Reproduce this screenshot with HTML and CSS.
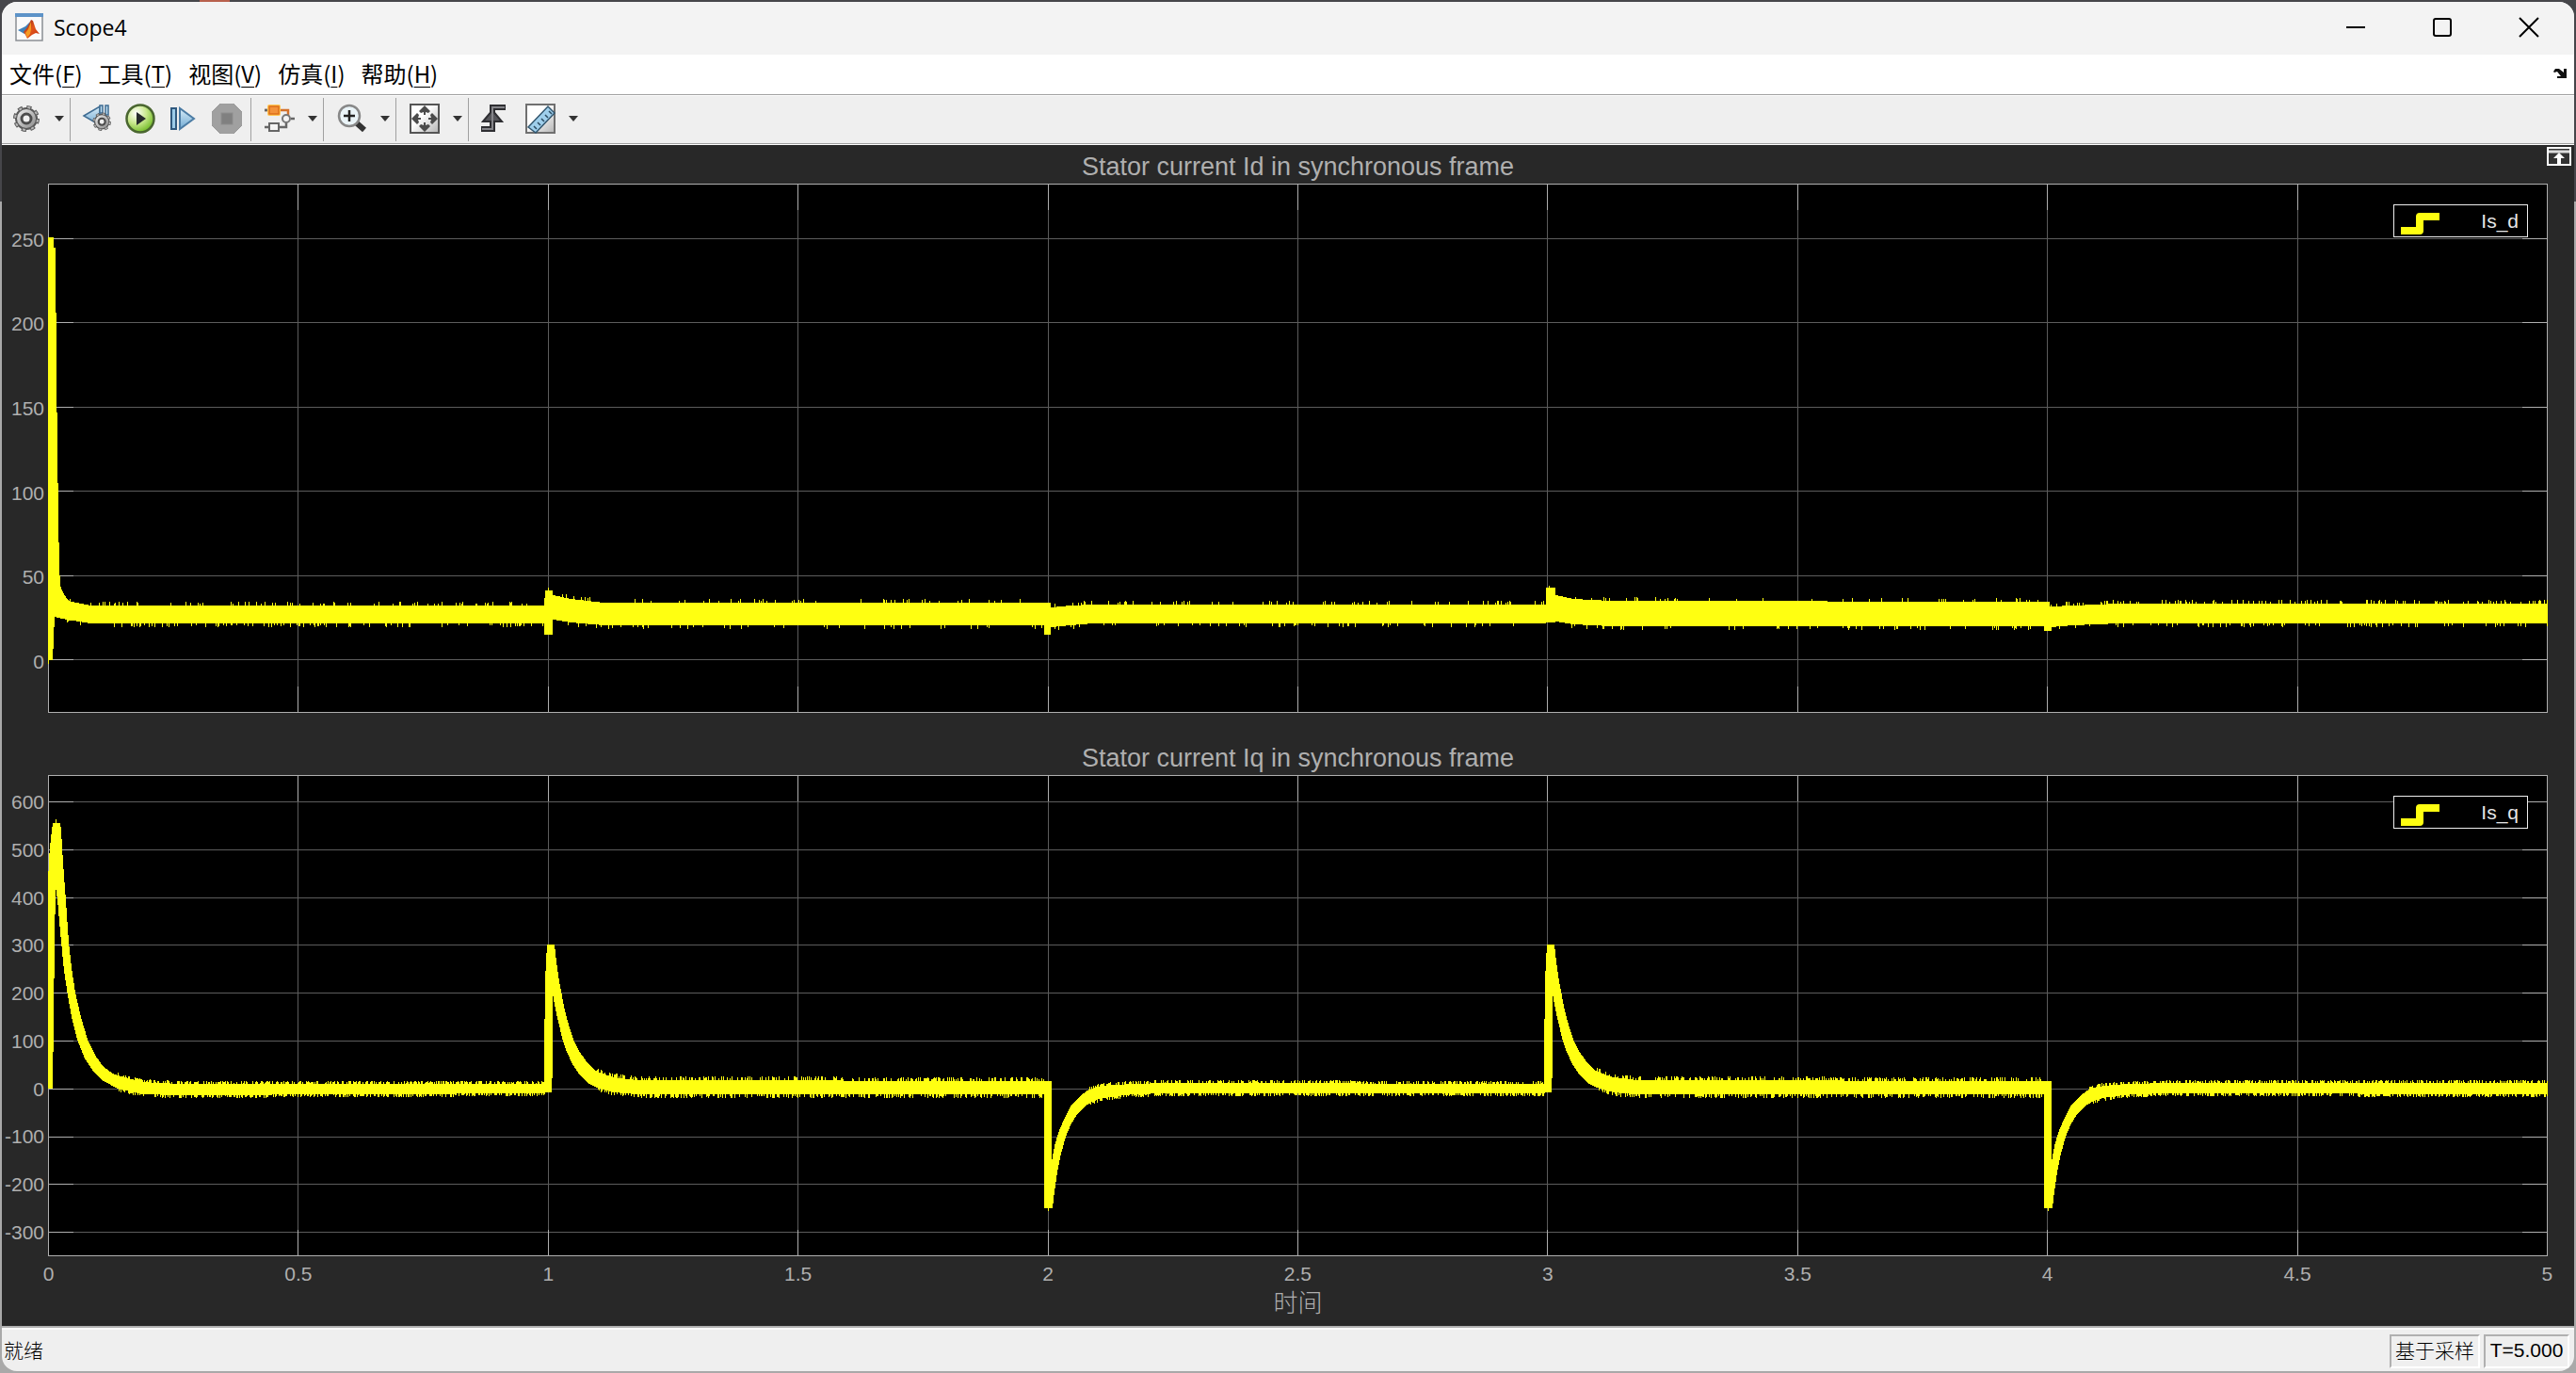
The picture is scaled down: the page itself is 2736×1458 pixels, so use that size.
FILE: index.html
```html
<!DOCTYPE html>
<html lang="zh-CN">
<head>
<meta charset="utf-8">
<title>Scope4</title>
<link rel="stylesheet" href="styles.css">
</head>
<body>
<svg class="defs" aria-hidden="true">
  <defs>
    <linearGradient id="metal" x1="0" y1="0" x2="1" y2="1"><stop offset="0" stop-color="#f4f4f4"/><stop offset="1" stop-color="#858585"/></linearGradient>
    <linearGradient id="sky" x1="0" y1="0" x2="0" y2="1"><stop offset="0" stop-color="#d8ecf8"/><stop offset="1" stop-color="#6fa9d2"/></linearGradient>
    <radialGradient id="green" cx=".35" cy=".3" r=".75"><stop offset="0" stop-color="#ffffff"/><stop offset=".5" stop-color="#c8e88c"/><stop offset="1" stop-color="#6db822"/></radialGradient>
    <linearGradient id="panel" x1="0" y1="0" x2="1" y2="1"><stop offset=".4" stop-color="#ffffff"/><stop offset="1" stop-color="#b4b4b4"/></linearGradient>
    <linearGradient id="flame" x1="0" y1="0" x2="1" y2="1"><stop offset="0" stop-color="#8a1c10"/><stop offset=".5" stop-color="#e2571b"/><stop offset="1" stop-color="#c22d10"/></linearGradient>
    <g id="gear">
      <circle cx="16" cy="16" r="12" fill="none" stroke="#5a5a5a" stroke-width="4" stroke-dasharray="5 4.42"/>
      <circle cx="16" cy="16" r="11" fill="url(#metal)" stroke="#5a5a5a" stroke-width="2"/>
      <circle cx="16" cy="16" r="12" fill="none" stroke="#b8b8b8" stroke-width="2" stroke-dasharray="3 6.42" stroke-dashoffset="-1"/>
      <circle cx="16" cy="16" r="5" fill="#f0f0f0" stroke="#4c4c4c" stroke-width="3"/>
    </g>
  </defs>
</svg>
<div class="window">
  <header class="titlebar">
    <svg class="app-icon" viewBox="0 0 30 30" aria-hidden="true">
      <rect x="1" y="1" width="28" height="28" fill="#fafafa" stroke="#8b8f94" stroke-width="1.5"/>
      <rect x="0" y="0" width="30" height="4" fill="#5d93c8"/>
      <path d="M3 18l8-4 5-5-3 9-3 4z" fill="#3f80b8"/>
      <path d="M9 20l4-5 4-8 2 1 3 9 4 5-4-1-4 2-5 4-2-4z" fill="url(#flame)"/>
      <path d="M11 21l3-4 3-8 0 8-1 5-3 4z" fill="#f59a22"/>
    </svg>
    <h1 class="app-name">Scope4</h1>
    <div class="controls">
      <button class="control" aria-label="最小化"><svg viewBox="0 0 22 22"><path d="M1 11h20"/></svg></button>
      <button class="control" aria-label="最大化"><svg viewBox="0 0 22 22"><rect x="2" y="2" width="18" height="18" rx="2"/></svg></button>
      <button class="control" aria-label="关闭"><svg viewBox="0 0 22 22"><path d="M1 1l20 20M21 1L1 21"/></svg></button>
    </div>
  </header>
  <nav class="menubar">
    <button class="menu">文件(<u>F</u>)</button>
    <button class="menu">工具(<u>T</u>)</button>
    <button class="menu">视图(<u>V</u>)</button>
    <button class="menu">仿真(<u>I</u>)</button>
    <button class="menu">帮助(<u>H</u>)</button>
    <button class="dock" aria-label="停靠"><svg viewBox="0 0 14 12"><path d="M0 4l2-3 4 0 5 4V1h3v10H4V9h4L4 4 1 5z" fill="#111"/></svg></button>
  </nav>
  <div class="toolbar" role="toolbar">
    <div class="group first">
      <button class="tool" aria-label="配置属性"><svg viewBox="0 0 32 32"><use href="#gear"/></svg></button>
      <button class="drop" aria-label="配置选项"><svg viewBox="0 0 10 6"><path d="M0 0h10L5 6z"/></svg></button>
    </div>
    <div class="group run">
      <button class="tool" aria-label="后退"><svg viewBox="0 0 32 32"><path d="M2 13L19 3v20z" fill="url(#sky)" stroke="#3f6c92" stroke-width="1.5"/><path d="M19 2h3v8h-3zM25 2h3v10h-3z" fill="#b9daef" stroke="#3f6c92" stroke-width="1.5"/><use href="#gear" transform="translate(10 8) scale(.7)"/></svg></button>
      <button class="tool" aria-label="运行"><svg viewBox="0 0 32 32"><circle cx="16" cy="16" r="14.5" fill="url(#green)" stroke="#4a6630" stroke-width="2.5"/><path d="M12 9l10 7-10 7z" fill="#262a2c"/></svg></button>
      <button class="tool" aria-label="步进"><svg viewBox="0 0 32 32"><path d="M3 5h5v22H3z" fill="#9ccbe8" stroke="#2f587e" stroke-width="2"/><path d="M12 5v22l15-11z" fill="url(#sky)" stroke="#4c7ca4" stroke-width="2"/></svg></button>
      <button class="tool" aria-label="停止" disabled><svg viewBox="0 0 32 32"><path d="M9 0h14l9 9v14l-9 9H9l-9-9V9z" fill="#a0a0a0" stroke="#9a9a9a" stroke-linejoin="round"/><rect x="10" y="10" width="12" height="12" fill="#808080" stroke="#8d8d8d"/></svg></button>
    </div>
    <div class="group">
      <button class="tool" aria-label="突出显示模块"><svg viewBox="0 0 32 32"><path d="M0 7h20l5 0v7" fill="none" stroke="#d4722c" stroke-width="2.5"/><path d="M0 25h23v-6M28 16h4M0 7h3" fill="none" stroke="#666" stroke-width="2.5"/><rect x="3" y="1" width="14" height="12" rx="2" fill="#ffc653"/><rect x="5" y="3" width="10" height="8" fill="#f3923b" stroke="#dd6e1b" stroke-width="1.5"/><rect x="5" y="21" width="10" height="8" fill="#f4f4f4" stroke="#666" stroke-width="2"/><circle cx="23" cy="16" r="4" fill="#f4f4f4" stroke="#777" stroke-width="2"/></svg></button>
      <button class="drop" aria-label="突出显示选项"><svg viewBox="0 0 10 6"><path d="M0 0h10L5 6z"/></svg></button>
    </div>
    <div class="group">
      <button class="tool" aria-label="放大"><svg viewBox="0 0 32 32"><path d="M20 20l9 8" stroke="#333" stroke-width="6"/><circle cx="13" cy="13" r="11" fill="#eaf4f8" stroke="#888" stroke-width="2.5"/><path d="M13 7v12M7 13h12" stroke="#222" stroke-width="2.5"/></svg></button>
      <button class="drop" aria-label="缩放选项"><svg viewBox="0 0 10 6"><path d="M0 0h10L5 6z"/></svg></button>
    </div>
    <div class="group">
      <button class="tool" aria-label="缩放到适合"><svg viewBox="0 0 32 32"><rect x="1" y="1" width="30" height="30" fill="url(#panel)" stroke="#555" stroke-width="2"/><path d="M16 2l6 6-2 2-3-1v3h-2V9l-3 1-2-2zM16 30l6-6-2-2-3 1v-3h-2v3l-3-1-2 2zM2 16l6-6 2 2-1 3h3v2H9l1 3-2 2zM30 16l-6-6-2 2 1 3h-3v2h3l-1 3 2 2z" fill="#4b4b4b"/></svg></button>
      <button class="drop" aria-label="适合选项"><svg viewBox="0 0 10 6"><path d="M0 0h10L5 6z"/></svg></button>
    </div>
    <div class="group last">
      <button class="tool" aria-label="触发"><svg viewBox="0 0 32 32"><path d="M3 27h12V4h14" fill="none" stroke="#2e2e32" stroke-width="6"/><path d="M5 19L15 7l10 12z" fill="#55555a" stroke="#2e2e32" stroke-width="2"/><path d="M4 27h11V4h13" fill="none" stroke="#85858a" stroke-width="2"/></svg></button>
      <button class="tool" aria-label="测量"><svg viewBox="0 0 32 32"><rect x="1" y="1" width="30" height="30" fill="url(#panel)" stroke="#707070" stroke-width="2"/><path d="M3 25L24 3l7 7-20 21z" fill="#9fcfec" stroke="#33566e" stroke-width="1.5"/><path d="M12 27l-3-3M16 23l-3-3M20 19l-3-3M24 15l-3-3M28 11l-3-3" stroke="#2c4c62" stroke-width="1.5"/></svg></button>
      <button class="drop" aria-label="测量选项"><svg viewBox="0 0 10 6"><path d="M0 0h10L5 6z"/></svg></button>
    </div>
  </div>
  <main class="scope">
    <button class="maximize" aria-label="最大化坐标区"><svg viewBox="0 0 26 20"><rect x="1" y="1" width="24" height="18" fill="#333" stroke="#fff" stroke-width="2"/><path d="M2 5h22" stroke="#ddd" stroke-width="3"/><path d="M13 6l6 6h-4v7h-4v-7H7z" fill="#fff"/></svg></button>
    <h2 class="plot-title title-d">Stator current Id in synchronous frame</h2>
    <section class="plot plot-d">
      <div class="y-axis y-axis-d"><span>250</span><span>200</span><span>150</span><span>100</span><span>50</span><span>0</span></div>
      <div class="axes">
        <svg class="trace" id="trace-d" viewBox="0 0 2655 562" preserveAspectRatio="none" role="img" aria-label="Is_d"></svg>
        <div class="legend"><svg viewBox="0 0 42 26" aria-hidden="true"><path d="M0 21h20V6h21"/></svg><span>Is_d</span></div>
      </div>
    </section>
    <h2 class="plot-title title-q">Stator current Iq in synchronous frame</h2>
    <section class="plot plot-q">
      <div class="y-axis y-axis-q"><span>600</span><span>500</span><span>400</span><span>300</span><span>200</span><span>100</span><span>0</span><span>-100</span><span>-200</span><span>-300</span></div>
      <div class="axes">
        <svg class="trace" id="trace-q" viewBox="0 0 2655 511" preserveAspectRatio="none" role="img" aria-label="Is_q"></svg>
        <div class="legend"><svg viewBox="0 0 42 26" aria-hidden="true"><path d="M0 21h20V6h21"/></svg><span>Is_q</span></div>
      </div>
    </section>
    <div class="x-axis"><span>0</span><span>0.5</span><span>1</span><span>1.5</span><span>2</span><span>2.5</span><span>3</span><span>3.5</span><span>4</span><span>4.5</span><span>5</span></div>
    <p class="x-title">时间</p>
  </main>
  <footer class="status">
    <span class="ready">就绪</span>
    <span class="cell cell-mode">基于采样</span>
    <span class="cell cell-time">T=5.000</span>
  </footer>
</div>
<script src="scope.js"></script>
</body>
</html>
```
FILE: styles.css
```css
* { box-sizing: border-box; }

body {
  margin: 0;
  padding: 2px;
  min-height: 100vh;
  display: flex;
  background:
    linear-gradient(90deg, transparent 212px, #b8604c 212px, #b8604c 244px, transparent 244px) 0 0 / 100% 2px no-repeat,
    linear-gradient(#46464a 214px, #a9a9a9 214px);
  font-family: "Liberation Sans", Arial, "Noto Sans CJK SC", sans-serif;
}

h1, h2, p { margin: 0; font-weight: 400; }

button {
  margin: 0;
  padding: 0;
  border: 0;
  background: none;
  color: inherit;
  font: inherit;
}

.defs { position: absolute; width: 0; height: 0; }

.window {
  flex: 1;
  display: flex;
  flex-direction: column;
  overflow: hidden;
  border-radius: 16px;
  background: #efefef;
}

.titlebar {
  display: flex;
  align-items: center;
  height: 56px;
  padding: 0 2px 2px 14px;
  background: #f3f3f3;
}
.app-icon { width: 30px; height: 30px; }
.app-name {
  margin-left: 11px;
  font: 23px/32px "Open Sans", "Noto Sans", sans-serif;
  color: #000;
}
.controls { display: flex; margin-left: auto; height: 100%; }
.control { display: flex; align-items: center; justify-content: center; width: 92px; }
.control svg { width: 22px; height: 22px; fill: none; stroke: #000; stroke-width: 2; }

.menubar {
  display: flex;
  align-items: center;
  gap: 17px;
  height: 43px;
  padding: 0 8px 2px;
  background: #fff;
  border-bottom: 1px solid #a0a0a0;
}
.menu { font: 24px/36px "Noto Sans CJK SC", sans-serif; color: #000; }
.menu u { text-decoration-thickness: 1px; text-underline-offset: 4px; }
.dock { display: flex; margin-left: auto; }
.dock svg { width: 14px; height: 12px; }

.toolbar {
  display: flex;
  align-items: center;
  height: 53px;
  padding-bottom: 2px;
  border-top: 1px solid #fff;
  border-bottom: 1px solid #fff;
  box-shadow: inset 0 -1px #a0a0a0;
}
.group {
  display: flex;
  align-items: center;
  gap: 1px;
  height: 46px;
  padding: 0 0 2px 7px;
  border-right: 1px solid #a0a0a0;
}
.first { padding-left: 3px; }
.run { gap: 0; padding: 0 2px 2px 5px; }
.last { padding-left: 3px; border-right: 0; }
.tool { display: flex; justify-content: center; width: 46px; }
.tool svg { width: 32px; height: 32px; }
.drop { display: flex; justify-content: center; width: 22px; }
.drop svg { width: 10px; height: 6px; fill: #333; }
.last .tool + .tool { margin-left: 3px; }

.scope {
  position: relative;
  flex: 1;
  display: flex;
  flex-direction: column;
  background: #282828;
  color: #afafaf;
  font-size: 21px;
}
.maximize { position: absolute; top: 2px; right: 3px; display: flex; }
.maximize svg { width: 26px; height: 20px; }

.plot-title {
  padding: 0 28px 3px 49px;
  text-align: center;
  font-size: 27px;
  line-height: 30px;
}
.title-d { padding-top: 8px; }
.title-q { padding-top: 33px; }

.plot { display: flex; padding-right: 28px; }
.plot-d { flex: 562; }
.plot-q { flex: 511; }

.y-axis {
  display: grid;
  align-items: center;
  width: 49px;
  text-align: right;
  line-height: 24px;
}
.y-axis-d { padding: 15px 4px 9px 0; grid-auto-rows: 1fr; }
.y-axis-q { padding: 4px 4px 0 0; grid-auto-rows: 1fr; }
.y-axis span { min-height: 0; white-space: nowrap; }

.axes { position: relative; flex: 1; background: #000; }
.trace { position: absolute; inset: 0; width: 100%; height: 100%; display: block; }
.trace path { shape-rendering: crispEdges; fill: none; }
.trace .grid { stroke: #5c5c5c; }
.trace .signal { fill: #ffff11; }
.trace .frame { stroke: #afafaf; }

.legend {
  position: absolute;
  top: 22px;
  right: 21px;
  display: flex;
  align-items: center;
  justify-content: space-between;
  width: 143px;
  height: 35px;
  padding: 0 9px 0 7px;
  border: 1px solid #efefef;
  background: #000;
  color: #e6e6e6;
}
.legend svg { width: 42px; height: 26px; margin-top: 4px; fill: none; stroke: #ffff11; stroke-width: 8; stroke-linejoin: round; }

.x-axis {
  display: flex;
  justify-content: space-between;
  padding: 6px 28px 0 49px;
  line-height: 26px;
}
.x-axis span { display: flex; justify-content: center; width: 1px; }
.x-title {
  padding: 0 28px 10px 49px;
  text-align: center;
  font: 300 26px/32px "Noto Sans CJK SC", sans-serif;
}

.status {
  display: flex;
  align-items: center;
  gap: 4px;
  height: 48px;
  padding: 4px 5px 0 2px;
  border-top: 2px solid #b0b0b0;
  box-shadow: inset 0 2px #fff;
  font-size: 21px;
  line-height: 30px;
  color: #000;
}
.ready { margin-right: auto; padding-bottom: 4px; }
.ready, .cell-mode { font-family: "Noto Sans CJK SC", sans-serif; font-weight: 300; }
.cell {
  height: 36px;
  border: 2px solid;
  border-color: #b0b0b0 #fff #fff #b0b0b0;
  text-align: center;
}
.cell-mode { width: 96px; line-height: 28px; }
.cell-time { width: 91px; }
```
FILE: scope.js
```js
// Draws the two signals. Distances are in drawing units measured from the
// top left corner of each set of axes; the drawing stretches with its box.
const WIDTH = 2655;
const STEP = 265.4;

function random(seed) {
  let s = seed;
  return () => {
    s = (s * 1664525 + 1013904223) % 4294967296;
    return s / 4294967296;
  };
}

// Band: list of [x, top, bottom] knots, with ragged edges of one unit columns.
function band(knots, density, height, seed) {
  const next = random(seed);
  const spike = () => (next() < density ? Math.ceil((0.3 + 0.7 * next()) * height) : 0);
  let d = "";
  let k = 0;
  for (let x = knots[0][0]; x < knots[knots.length - 1][0]; x++) {
    while (k < knots.length - 2 && x >= knots[k + 1][0]) k++;
    const [x0, t0, b0] = knots[k];
    const [x1, t1, b1] = knots[k + 1];
    const f = (x - x0) / (x1 - x0);
    const top = Math.round(t0 + (t1 - t0) * f) - spike();
    const bottom = Math.round(b0 + (b1 - b0) * f) + spike();
    d += `M${x} ${top}h1V${bottom}h-1z`;
  }
  return d;
}

function shift(points, dx) {
  return "M" + points.map(([x, y]) => `${x + dx} ${y}`).join("L") + "z";
}

function draw(id, height, ticks, signal) {
  let grid = "";
  let frame = `M.5 .5H${WIDTH - 0.5}V${height - 0.5}H.5z`;
  for (let i = 1; i < 10; i++) {
    const x = Math.round(i * STEP) + 0.5;
    grid += `M${x} 0V${height}`;
    frame += `M${x} 0v28M${x} ${height}v-28`;
  }
  for (const y of ticks) {
    grid += `M0 ${y}H${WIDTH}`;
    frame += `M0 ${y}h27M${WIDTH} ${y}h-27`;
  }
  document.getElementById(id).innerHTML =
    `<path class="grid" d="${grid}"/><path class="frame" d="${frame}"/><path class="signal" d="${signal}"/>`;
}

const startD = [[0, 57], [6, 57], [6, 68], [8, 68], [9, 205], [11, 355], [12, 405], [13, 427], [16, 434], [19, 439], [24, 445], [24, 464], [7, 460], [5, 506], [1, 506], [1, 510], [0, 510]];
const signalD =
  shift(startD, 0) +
  band([[8, 440, 460], [20, 443, 463], [45, 448, 467], [528, 448, 467]], 0.14, 4, 7) +
  "M528 432h3v-3h1v3h4V479H527V448z" +
  band([[536, 437, 463], [555, 441, 466], [590, 445, 469], [1058, 445, 469]], 0.1, 4, 21) +
  "M1058 445h7V479H1058z" +
  band([[1065, 450, 471], [1085, 448, 469], [1110, 447, 467], [1591, 447, 467]], 0.1, 4, 5) +
  "M1591 429h3v-2h1v2h6V466h-10z" +
  band([[1601, 437, 465], [1620, 441, 468], [1660, 443, 470], [2120, 444, 470]], 0.1, 4, 33) +
  "M2120 444h6V470h2v5h-8z" +
  band([[2126, 449, 471], [2150, 448, 469], [2200, 446, 467], [2655, 446, 467]], 0.16, 4, 12);
draw("trace-d", 562, [58.5, 147.5, 237.5, 326.5, 416.5, 505.5], signalD);

const startQ = [[0, 333], [0, 117], [1, 88], [3, 67], [5, 51], [8, 51], [8, 47], [9, 47], [9, 51], [13, 51], [14, 58], [15, 77], [17, 107], [19, 134], [22, 177], [25, 205], [29, 231], [35, 257], [42, 281], [51, 299], [59, 310], [69, 317], [80, 321], [80, 335], [74, 333], [59, 325], [49, 316], [39, 301], [31, 281], [25, 257], [21, 234], [17, 208], [13, 167], [10, 132], [8, 119], [7, 177], [6, 257], [5, 333]];
const peak = [[527, 337], [527, 303], [528, 217], [530, 180], [538, 180], [540, 199], [543, 219], [546, 235], [549, 250], [554, 269], [559, 283], [564, 293], [571, 303], [579, 312], [589, 318], [589, 334], [583, 332], [573, 327], [565, 319], [557, 307], [551, 294], [546, 279], [542, 262], [539, 249], [536, 232], [536, 307], [535, 337]];
const dip = [[1058, 325], [1066, 325], [1066, 411], [1069, 394], [1073, 380], [1079, 366], [1086, 352], [1095, 342], [1104, 335], [1114, 331], [1114, 345], [1109, 347], [1101, 352], [1094, 359], [1087, 370], [1081, 384], [1076, 402], [1072, 422], [1069, 442], [1067, 460], [1063, 460], [1063, 463], [1062, 463], [1062, 460], [1058, 460]];
const CYCLE = 1062;
const signalQ =
  shift(startQ, 0) +
  band([[74, 319, 333], [100, 326, 339], [140, 328, 340], [528, 328, 338]], 0.5, 3, 3) +
  shift(peak, 0) +
  band([[583, 315, 332], [600, 321, 337], [625, 324, 339], [1058, 325, 339]], 0.42, 4, 9) +
  shift(dip, 0) +
  band([[1106, 334, 347], [1120, 330, 343], [1150, 328, 339], [1190, 327, 338], [1590, 328, 338]], 0.5, 3, 17) +
  shift(peak, CYCLE) +
  band([[1645, 315, 332], [1662, 321, 337], [1687, 324, 339], [2120, 325, 339]], 0.42, 4, 29) +
  shift(dip, CYCLE) +
  band([[2168, 334, 347], [2182, 330, 343], [2212, 328, 339], [2250, 327, 338], [2655, 327, 339]], 0.5, 3, 41);
draw("trace-q", 511, [28.5, 79.5, 130.5, 180.5, 231.5, 282.5, 333.5, 384.5, 434.5, 485.5], signalQ);
```
